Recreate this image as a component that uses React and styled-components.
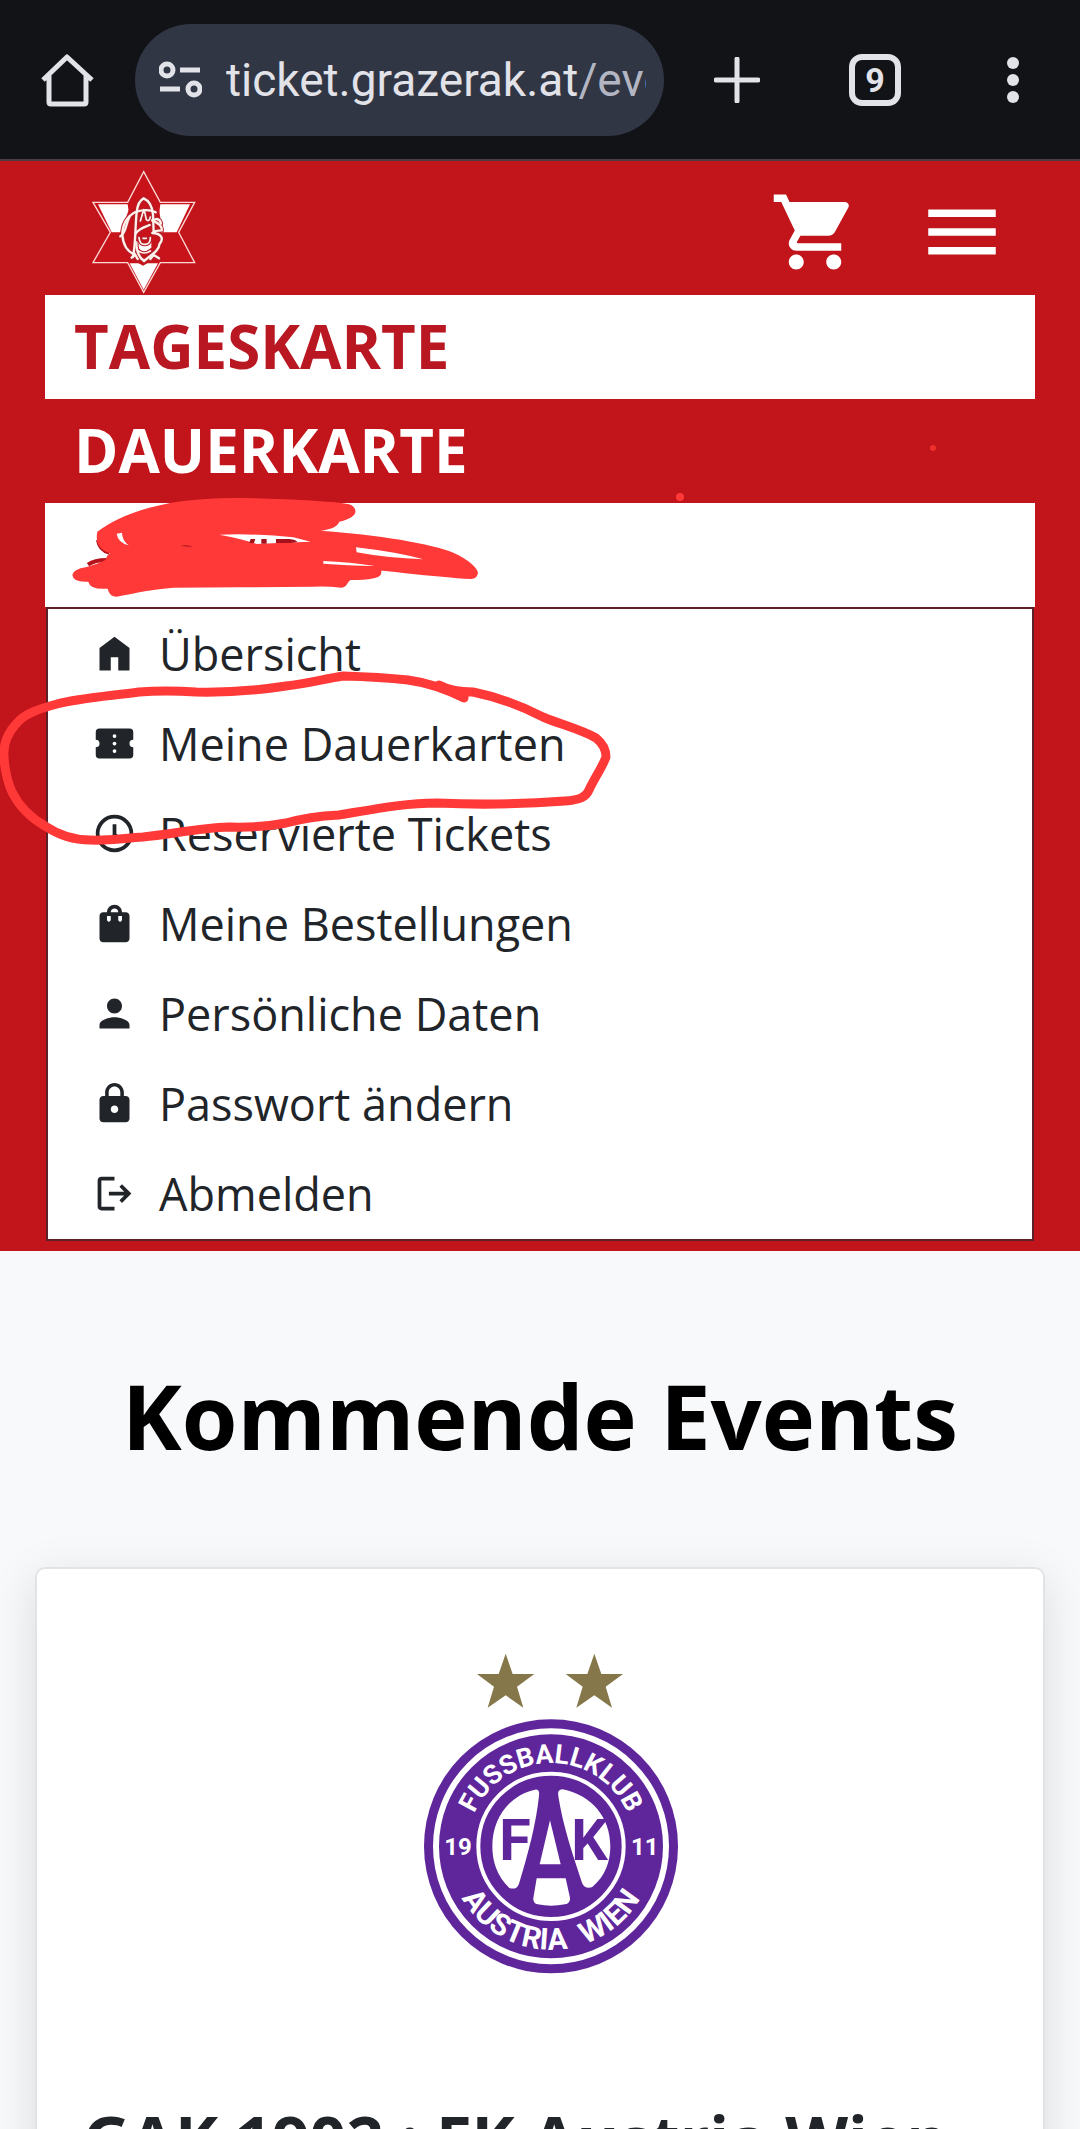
import { MdLock, MdMenu, MdPerson, MdShoppingBag, MdShoppingCart } from "react-icons/md";
import styled, { createGlobalStyle, css } from "styled-components";

const GlobalStyle = createGlobalStyle`
  * {
    box-sizing: border-box;
  }
  body {
    margin: 0;
    background: #f8f9fb;
    font-family: "Open Sans", "Noto Sans", sans-serif;
    color: #212529;
  }
  svg {
    display: block;
  }
`;

const Screen = styled.div`
  position: relative;
  height: 100vh;
  overflow: hidden;
`;

const plainButton = css`
  display: flex;
  align-items: center;
  justify-content: center;
  padding: 0;
  border: 0;
  background: none;
  color: inherit;
  font: inherit;
  cursor: pointer;
`;

const BrowserBar = styled.div`
  display: flex;
  align-items: center;
  height: 161px;
  padding: 0 22px 0 41px;
  border-bottom: 2px solid #4c3a44;
  background: #121316;
  color: #e2e2e9;
`;

const BarButton = styled.button`
  ${plainButton}
  flex: none;
  width: ${({ $width }) => $width || 90}px;
  height: 90px;
`;

const AddressBar = styled.button`
  ${plainButton}
  flex: 1;
  justify-content: flex-start;
  gap: 24px;
  min-width: 0;
  height: 112px;
  margin: 0 28px 0 41px;
  padding: 0 18px 0 24px;
  border-radius: 56px;
  background: #313644;
`;

const Address = styled.span`
  flex: 1;
  min-width: 0;
  overflow: hidden;
  white-space: nowrap;
  text-align: left;
  font-family: Roboto, "Open Sans", sans-serif;
  font-size: 46px;
  line-height: 64px;
`;

const AddressPath = styled.span`
  color: #b3b6c2;
`;

const BarActions = styled.div`
  display: flex;
  gap: 48px;
`;

const Header = styled.header`
  padding: 0 45px 10px;
  background: #c2141b;
`;

const HeaderTop = styled.div`
  display: flex;
  align-items: center;
  height: 134px;
  padding: 8px 28px 0 47px;
  color: #fff;
`;

const HomeLink = styled.a`
  margin-right: auto;
`;

const HeaderButton = styled.button`
  ${plainButton}
  margin-left: 57px;
  font-size: 90px;
`;

const MainLink = styled.a`
  display: flex;
  align-items: center;
  height: 104px;
  padding: 0 29px 2px;
  background: ${({ $active }) => ($active ? "#c2141b" : "#fff")};
  color: ${({ $active }) => ($active ? "#fff" : "#b91722")};
  font-size: 60px;
  font-weight: 700;
  text-decoration: none;
`;

const AccountMenu = styled.ul`
  margin: 0 1px;
  padding: 0;
  border: 2px solid #5d2029;
  background: #fff;
  list-style: none;
`;

const MenuLink = styled.a`
  display: flex;
  align-items: center;
  gap: 22px;
  height: 90px;
  padding: 0 44px 2px;
  color: inherit;
  font-size: 45px;
  text-decoration: none;
`;

const Events = styled.main`
  padding: 104px 35px 0;
`;

const Heading = styled.h1`
  margin: 0;
  color: #000;
  font-size: 90px;
  line-height: 120px;
  text-align: center;
`;

const EventCard = styled.article`
  margin-top: 92px;
  padding: 62px 46px 48px;
  border: 2px solid #e2e3e5;
  border-radius: 10px;
  background: #fff;
  box-shadow: 0 12px 48px rgba(0, 0, 0, 0.12);
`;

const CardLogo = styled.div`
  display: flex;
  justify-content: center;
  height: 462px;
`;

const CardTitle = styled.h2`
  margin: 0;
  font-size: 65px;
  line-height: 90px;
  white-space: nowrap;
`;

const Marker = styled.svg`
  position: absolute;
  top: 0;
  left: 0;
  pointer-events: none;
`;

function MenuIcon({ children }) {
  return (
    <svg width="45" height="45" viewBox="0 0 24 24" fill="currentColor" aria-hidden="true">
      {children}
    </svg>
  );
}

const menuItems = [
  {
    label: "Übersicht",
    icon: (
      <MenuIcon>
        <path d="M4 21V9l8-6 8 6v12h-6v-7h-4v7z" />
      </MenuIcon>
    ),
  },
  {
    label: "Meine Dauerkarten",
    icon: (
      <MenuIcon>
        <path d="M22 10V6a2 2 0 0 0-2-2H4a2 2 0 0 0-2 2v4a2 2 0 0 1 0 4v4a2 2 0 0 0 2 2h16a2 2 0 0 0 2-2v-4a2 2 0 0 1 0-4z" />
        <circle cx="12" cy="8" r="1" fill="#fff" />
        <circle cx="12" cy="12" r="1" fill="#fff" />
        <circle cx="12" cy="16" r="1" fill="#fff" />
      </MenuIcon>
    ),
  },
  {
    label: "Reservierte Tickets",
    icon: (
      <MenuIcon>
        <g fill="none" stroke="currentColor" strokeWidth="2">
          <circle cx="12" cy="12" r="9" />
          <path d="M12 7v5.4l3.6 3.6" />
        </g>
      </MenuIcon>
    ),
  },
  { label: "Meine Bestellungen", icon: <MdShoppingBag size={45} /> },
  { label: "Persönliche Daten", icon: <MdPerson size={45} /> },
  { label: "Passwort ändern", icon: <MdLock size={45} /> },
  {
    label: "Abmelden",
    icon: (
      <MenuIcon>
        <path d="M5 21q-.825 0-1.412-.587T3 19V5q0-.825.588-1.413T5 3h7v2H5v14h7v2zm11-4-1.375-1.45 2.55-2.55H9v-2h8.175l-2.55-2.55L16 7l5 5z" />
      </MenuIcon>
    ),
  },
];

function GakCrest() {
  return (
    <svg width="104" height="124" viewBox="65 46 312 370" role="img" aria-label="GAK 1902">
      <path
        d="M220 50l50 92h103l-48 90 48 91H270l-50 89-48-89H68l52-91-52-90h104z"
        fill="#c8131b"
        stroke="#fbd9d6"
        strokeWidth="4"
      />
      <path d="M83 148h89l12 84h-60zM270 148h89l-40 84h-60zM178 325h85l-43 79z" fill="#fff" />
      <path d="M180 152l40-24 44 24 10 60-6 90-50 30-50-28-20-66z" fill="#c8131b" />
      <path d="M203 262q20 14 40 0v16l-22 16-18-16z" fill="#fff" />
      {[
        { stroke: "#b3202a", strokeWidth: 13 },
        { stroke: "#fff1ec", strokeWidth: 7 },
      ].map((pen) => (
        <g key={pen.stroke} fill="none" strokeLinecap="round" {...pen}>
          <path d="M188 306C196 270 194 220 199 172C202 142 212 134 220 130C238 138 246 156 248 178L250 232" />
          <path d="M272 206q-2-12-12-14l-14 4M256 172C238 162 212 164 194 172C166 188 156 214 156 240C158 266 168 288 192 298" />
          <path d="M178 184C166 206 168 234 150 244" />
          <path d="M196 236C208 218 226 216 238 210M246 196C268 206 276 214 274 226C262 226 252 228 246 234M246 234C276 236 280 252 268 266C266 288 242 300 221 318C204 306 198 290 198 262" />
          <path d="M184 308l10-10 8 14M240 312l10-12 16 10" />
          <path d="M220 164l-10 34M222 166l6 28q8 8 12-8" strokeWidth={pen.strokeWidth - 2} />
          <path d="M206 248q2 22 18 20 16 0 16-20M218 250h10M204 288q18 12 36 0" strokeWidth={pen.strokeWidth - 2} />
        </g>
      ))}
    </svg>
  );
}

function AustriaCrest() {
  return (
    <svg width="280" height="360" viewBox="0 0 840 1080" role="img" aria-label="FK Austria Wien">
      <defs>
        <path id="arc-top" d="M203 646a250 250 0 0 1 500 0" />
        <path id="arc-bottom" d="M143 646a310 310 0 0 0 620 0" />
      </defs>
      <path
        id="star"
        d="M317 68l21 61h65l-52 38 19 63-53-37-54 37 19-63-51-38h65z"
        fill="#85774a"
      />
      <use href="#star" x="266" />
      <circle cx="453" cy="646" r="381" fill="#5f259b" />
      <circle cx="453" cy="646" r="345" fill="none" stroke="#fff" strokeWidth="18" />
      <circle cx="453" cy="646" r="218" fill="none" stroke="#fff" strokeWidth="12" />
      <g fill="#fff">
        <path d="M405 476Q420 474 417 494C408 580 385 665 357 758Q350 778 328 771C290 735 277 690 277 646C277 560 330 492 405 476z" />
        <path d="M488 475Q470 476 475 496C490 590 518 670 546 755Q553 775 576 769C617 735 631 690 631 646C631 560 575 492 488 475z" />
        <path d="M450 568l32 132h-63z" />
        <path d="M410 742h87l13 58Q512 815 495 820Q453 828 413 820Q398 816 400 802z" />
      </g>
      <g fill="#fff" fontFamily="Roboto, sans-serif" fontWeight="700" fontSize="80">
        <text textAnchor="middle">
          <textPath href="#arc-top" startOffset="50%">
            FUSSBALLKLUB
          </textPath>
        </text>
        <text fontSize="90" textAnchor="middle">
          <textPath href="#arc-bottom" startOffset="36%">
            AUSTRIA
          </textPath>
        </text>
        <text fontSize="90" textAnchor="middle">
          <textPath href="#arc-bottom" startOffset="72%">
            WIEN
          </textPath>
        </text>
        <text x="174" y="671" textAnchor="middle" fontSize="72">
          19
        </text>
        <text x="734" y="671" textAnchor="middle" fontSize="72">
          11
        </text>
      </g>
      <g fill="#5f259b" fontFamily="Roboto, sans-serif" fontWeight="700" fontSize="172">
        <text x="298" y="688">
          F
        </text>
        <text x="514" y="686">
          K
        </text>
      </g>
    </svg>
  );
}

function MarkerStrokes() {
  return (
    <Marker width="1080" height="900" viewBox="0 0 1080 900" fill="none" aria-hidden="true">
      <path
        d="M464 698C448 690 430 683 408 680Q380 677 343 676C324 679 306 684 286 686Q240 693 196 692Q165 690 139 692C110 696 80 698 57 704C38 709 24 714 16 724C6 735 3 745 4 757Q5 776 12 792C20 808 31 818 45 826Q66 840 90 840C108 841 125 838 143 837C172 834 200 828 229 827Q260 828 286 823C304 818 320 816 339 815C375 809 405 803 437 803Q500 806 565 801C580 800 586 797 589 790C595 777 602 768 606 757Q606 746 596 738C580 729 562 725 543 717Q508 699 473 692Q452 692 439 685"
        stroke="#ff3838"
        strokeWidth="9"
        strokeLinecap="round"
        strokeLinejoin="round"
      />
      <g transform="translate(60 490) scale(0.3333)">
        <path d="M114 150q4 30 34 38M84 224q20-14 56-14" stroke="#b5121c" strokeWidth="12" />
        <path
          d="M112 125C180 75 300 24 520 24C650 24 840 35 868 43C895 54 898 82 838 95C832 112 805 120 780 122C950 133 1120 162 1180 188C1225 208 1255 235 1254 250Q1250 268 1232 267C1140 262 950 240 790 221L790 213L950 228Q968 238 963 252Q958 270 872 270C862 275 862 292 845 293Q800 288 760 290L540 292L340 293C280 298 230 308 170 320Q148 320 143 296Q90 300 85 275Q40 278 37 255Q38 238 80 231C110 222 142 210 138 205Q140 195 150 190C120 180 105 160 112 125z"
          fill="#ff3838"
        />
        <path
          d="M170 131l16-3q0 22 20 38q-32-8-36-35zM478 134Q590 130 700 142L752 155Q670 158 590 162Q545 146 478 134zM888 172Q1010 186 1090 208Q980 204 890 187zM790 213Q870 216 945 228Q860 226 790 221z"
          fill="#fff"
        />
        <path d="M572 147h14l-4 12h-14zM604 147h16v14h-16zM648 147h40q20 2 24 9l-20 3h-44zM362 168q16-6 38 3z" fill="#a5101c" />
      </g>
      <circle cx="680" cy="497" r="4" fill="#ff3838" />
      <circle cx="933" cy="448" r="3" fill="#f0302f" />
    </Marker>
  );
}

function Browser() {
  return (
    <BrowserBar>
      <BarButton $width={53} aria-label="Startseite">
        <svg width="53" height="54" viewBox="0 0 53 54" fill="none" stroke="currentColor">
          <path
            d="M2 27L26 4l25 23M8 22v27q0 2 2 2h33q2 0 2-2V22"
            strokeWidth="5"
            strokeLinejoin="round"
          />
        </svg>
      </BarButton>
      <AddressBar aria-label="Adresse ticket.grazerak.at">
        <svg width="43" height="38" viewBox="0 0 43 38" fill="none" stroke="currentColor">
          <circle cx="8" cy="9" r="6" strokeWidth="5" />
          <circle cx="35" cy="28" r="6" strokeWidth="5" />
          <path d="M21 9h20M1 28h20" strokeWidth="5" />
        </svg>
        <Address>
          ticket.grazerak.at<AddressPath>/eve</AddressPath>
        </Address>
      </AddressBar>
      <BarActions>
        <BarButton aria-label="Neuer Tab">
          <svg width="46" height="46" viewBox="0 0 46 46" stroke="currentColor">
            <path d="M23 2v42M2 23h42" strokeWidth="5" strokeLinecap="round" />
          </svg>
        </BarButton>
        <BarButton aria-label="9 Tabs">
          <svg width="52" height="52" viewBox="0 0 52 52">
            <rect
              x="3"
              y="3"
              width="46"
              height="46"
              rx="10"
              fill="none"
              stroke="currentColor"
              strokeWidth="6"
            />
            <text
              x="26"
              y="38"
              textAnchor="middle"
              fill="currentColor"
              fontFamily="Roboto, sans-serif"
              fontWeight="700"
              fontSize="34"
            >
              9
            </text>
          </svg>
        </BarButton>
        <BarButton aria-label="Mehr">
          <svg width="14" height="48" viewBox="0 0 14 48" fill="currentColor">
            <circle cx="7" cy="7" r="6" />
            <circle cx="7" cy="24" r="6" />
            <circle cx="7" cy="41" r="6" />
          </svg>
        </BarButton>
      </BarActions>
    </BrowserBar>
  );
}

function App() {
  return (
    <Screen>
      <GlobalStyle />
      <Browser />
      <Header>
        <HeaderTop>
          <HomeLink href="#home">
            <GakCrest />
          </HomeLink>
          <HeaderButton aria-label="Warenkorb">
            <MdShoppingCart />
          </HeaderButton>
          <HeaderButton aria-label="Menü">
            <MdMenu />
          </HeaderButton>
        </HeaderTop>
        <nav>
          <MainLink href="#tageskarte">TAGESKARTE</MainLink>
          <MainLink href="#dauerkarte" $active>
            DAUERKARTE
          </MainLink>
          <MainLink href="#konto" aria-label="Konto" />
          <AccountMenu>
            {menuItems.map((item) => (
              <li key={item.label}>
                <MenuLink href="#konto">
                  {item.icon}
                  {item.label}
                </MenuLink>
              </li>
            ))}
          </AccountMenu>
        </nav>
      </Header>
      <Events>
        <Heading>Kommende Events</Heading>
        <EventCard>
          <CardLogo>
            <AustriaCrest />
          </CardLogo>
          <CardTitle>GAK 1902 : FK Austria Wien</CardTitle>
        </EventCard>
      </Events>
      <MarkerStrokes />
    </Screen>
  );
}

export default App;
